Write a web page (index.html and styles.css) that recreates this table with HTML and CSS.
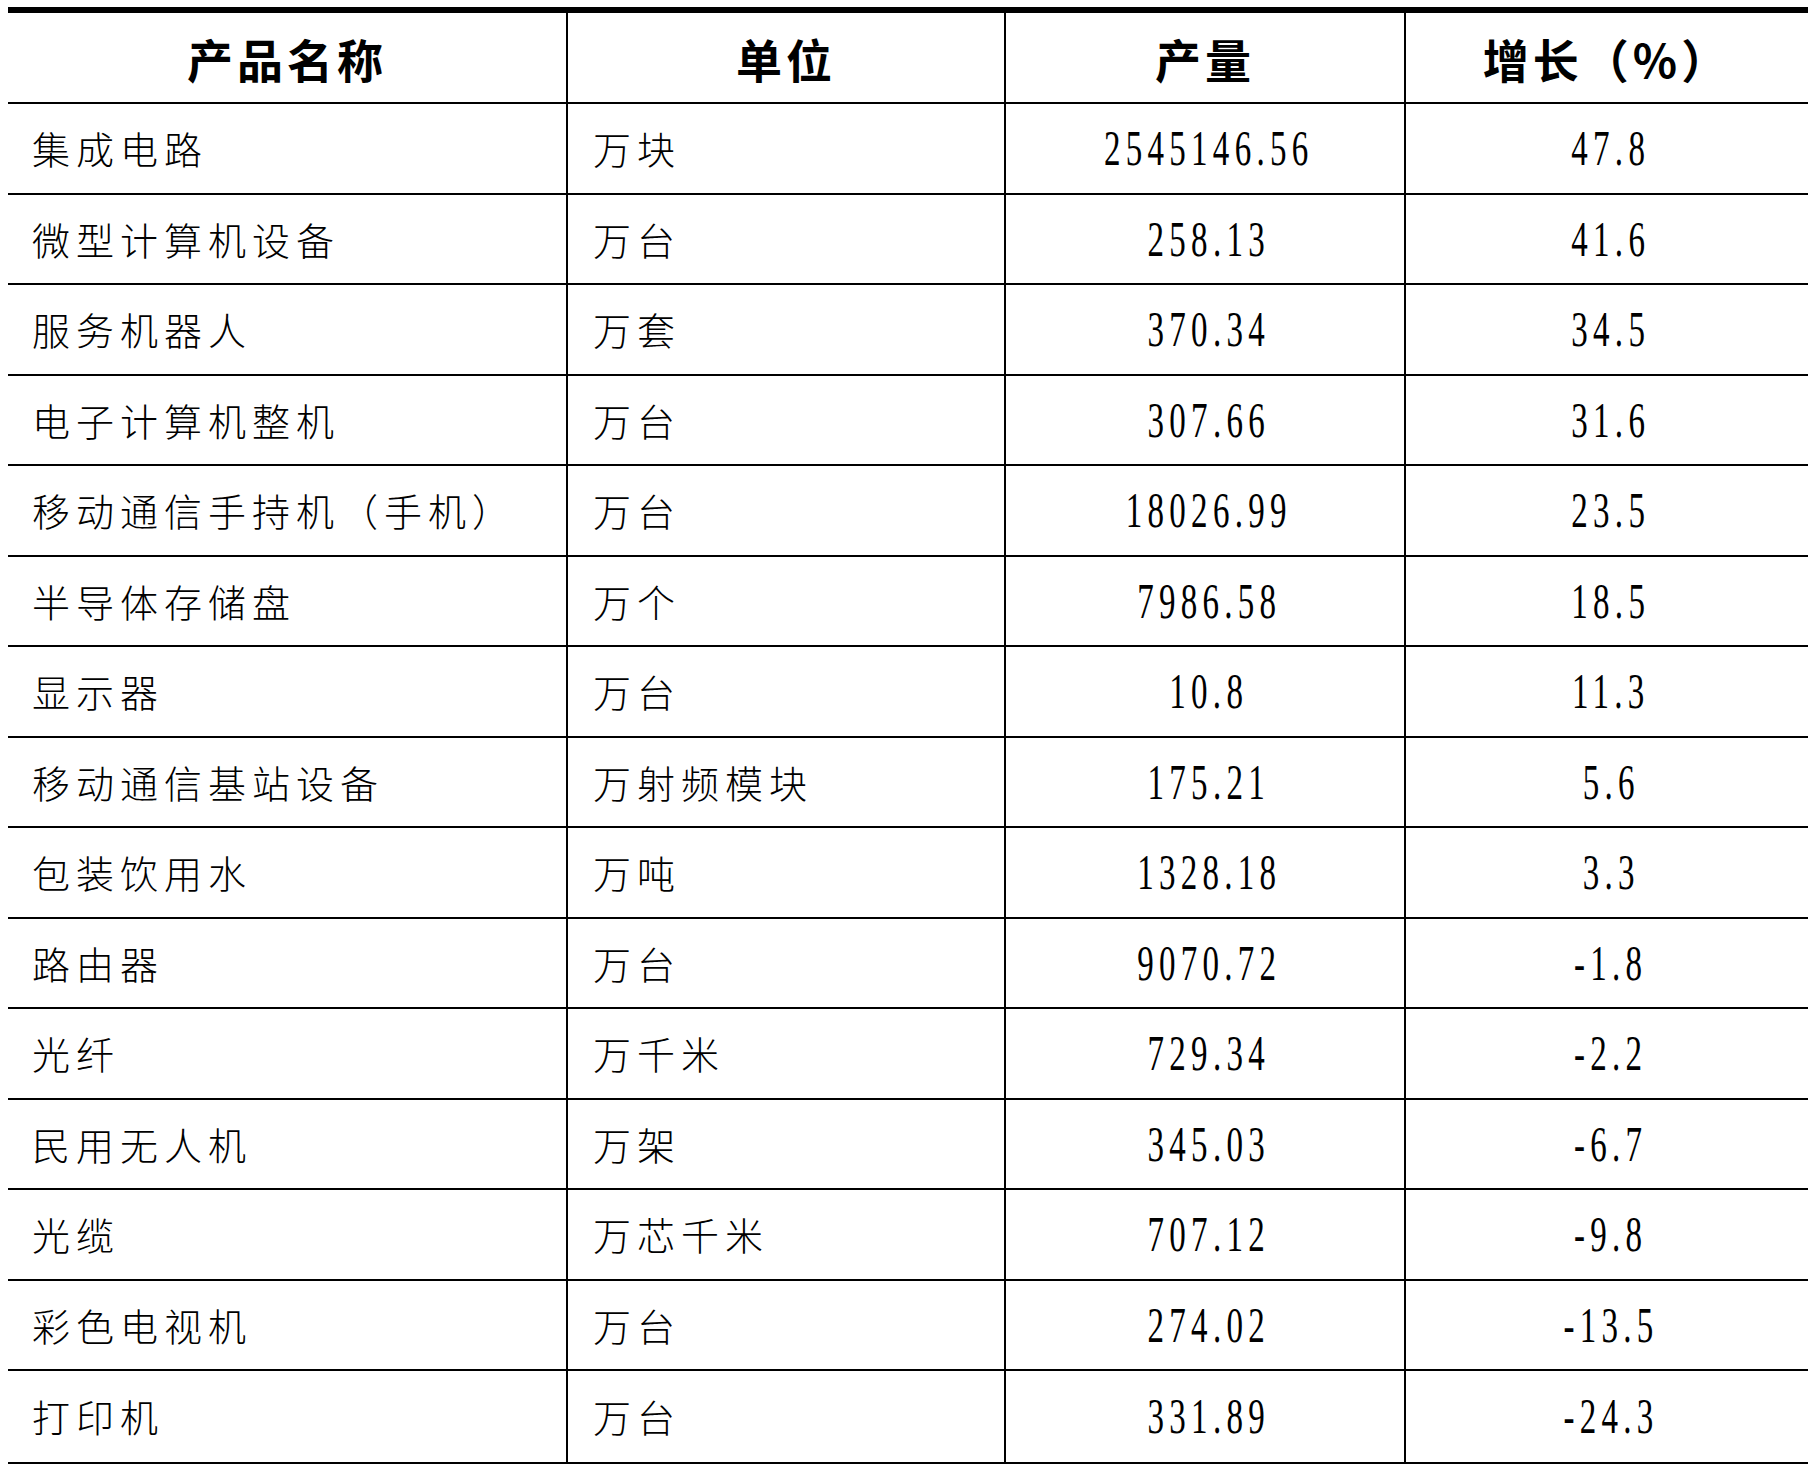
FILE: index.html
```html
<!DOCTYPE html>
<html lang="zh-CN">
<head>
<meta charset="utf-8">
<title>产品产量</title>
<link rel="stylesheet" href="styles.css">
</head>
<body>
<table class="data-table">
  <colgroup>
    <col class="c-name"><col class="c-unit"><col class="c-qty"><col class="c-growth">
  </colgroup>
  <thead>
    <tr class="head-row">
      <th>产品名称</th><th>单位</th><th>产量</th><th>增长（%）</th>
    </tr>
  </thead>
  <tbody>
    <tr><td class="name">集成电路</td><td class="unit">万块</td><td class="num"><span>2545146.56</span></td><td class="num"><span>47.8</span></td></tr>
    <tr><td class="name">微型计算机设备</td><td class="unit">万台</td><td class="num"><span>258.13</span></td><td class="num"><span>41.6</span></td></tr>
    <tr><td class="name">服务机器人</td><td class="unit">万套</td><td class="num"><span>370.34</span></td><td class="num"><span>34.5</span></td></tr>
    <tr><td class="name">电子计算机整机</td><td class="unit">万台</td><td class="num"><span>307.66</span></td><td class="num"><span>31.6</span></td></tr>
    <tr><td class="name">移动通信手持机（手机）</td><td class="unit">万台</td><td class="num"><span>18026.99</span></td><td class="num"><span>23.5</span></td></tr>
    <tr><td class="name">半导体存储盘</td><td class="unit">万个</td><td class="num"><span>7986.58</span></td><td class="num"><span>18.5</span></td></tr>
    <tr><td class="name">显示器</td><td class="unit">万台</td><td class="num"><span>10.8</span></td><td class="num"><span>11.3</span></td></tr>
    <tr><td class="name">移动通信基站设备</td><td class="unit">万射频模块</td><td class="num"><span>175.21</span></td><td class="num"><span>5.6</span></td></tr>
    <tr><td class="name">包装饮用水</td><td class="unit">万吨</td><td class="num"><span>1328.18</span></td><td class="num"><span>3.3</span></td></tr>
    <tr><td class="name">路由器</td><td class="unit">万台</td><td class="num"><span>9070.72</span></td><td class="num"><span>-1.8</span></td></tr>
    <tr><td class="name">光纤</td><td class="unit">万千米</td><td class="num"><span>729.34</span></td><td class="num"><span>-2.2</span></td></tr>
    <tr><td class="name">民用无人机</td><td class="unit">万架</td><td class="num"><span>345.03</span></td><td class="num"><span>-6.7</span></td></tr>
    <tr><td class="name">光缆</td><td class="unit">万芯千米</td><td class="num"><span>707.12</span></td><td class="num"><span>-9.8</span></td></tr>
    <tr><td class="name">彩色电视机</td><td class="unit">万台</td><td class="num"><span>274.02</span></td><td class="num"><span>-13.5</span></td></tr>
    <tr class="last-row"><td class="name">打印机</td><td class="unit">万台</td><td class="num"><span>331.89</span></td><td class="num"><span>-24.3</span></td></tr>
  </tbody>
</table>
</body>
</html>
```
FILE: styles.css
```css
html, body {
  margin: 0;
  padding: 0;
  background: #fff;
}

body {
  padding: 7px 0 0 8px;
  font-family: "Noto Sans CJK SC", "Noto Sans", sans-serif;
  color: #000;
}

.data-table {
  width: 1800px;
  table-layout: fixed;
  border-collapse: separate;
  border-spacing: 0;
  border-top: 6px solid #000;
  border-bottom: 6px solid #000;
}

.c-name { width: 560px; }
.c-unit { width: 438px; }
.c-qty { width: 400px; }
.c-growth { width: 402px; }

.data-table th,
.data-table td {
  padding: 0;
  border-bottom: 2px solid #000;
  border-right: 2px solid #000;
  vertical-align: middle;
  white-space: nowrap;
}

.data-table th:last-child,
.data-table td:last-child {
  border-right: none;
}

.last-row td {
  border-bottom: none;
}

.head-row {
  height: 91px;
}

.data-table th {
  font-size: 46px;
  font-weight: 700;
  letter-spacing: 4px;
  text-align: center;
  line-height: 1;
}

.data-table tbody tr {
  height: 90.5px;
}

.last-row {
  height: 88.5px;
}

.data-table td {
  font-size: 38px;
  font-weight: 300;
  line-height: 1;
  letter-spacing: 6px;
}

.name {
  padding-left: 24px !important;
  text-align: left;
}

.unit {
  padding-left: 25px !important;
  text-align: left;
}

.num {
  text-align: center;
}

.num span {
  display: inline-block;
  font-family: "Liberation Serif", "DejaVu Serif", serif;
  font-size: 50px;
  font-weight: 400;
  letter-spacing: 8px;
  transform: scaleX(0.66);
  margin-left: 8px;
}
```
